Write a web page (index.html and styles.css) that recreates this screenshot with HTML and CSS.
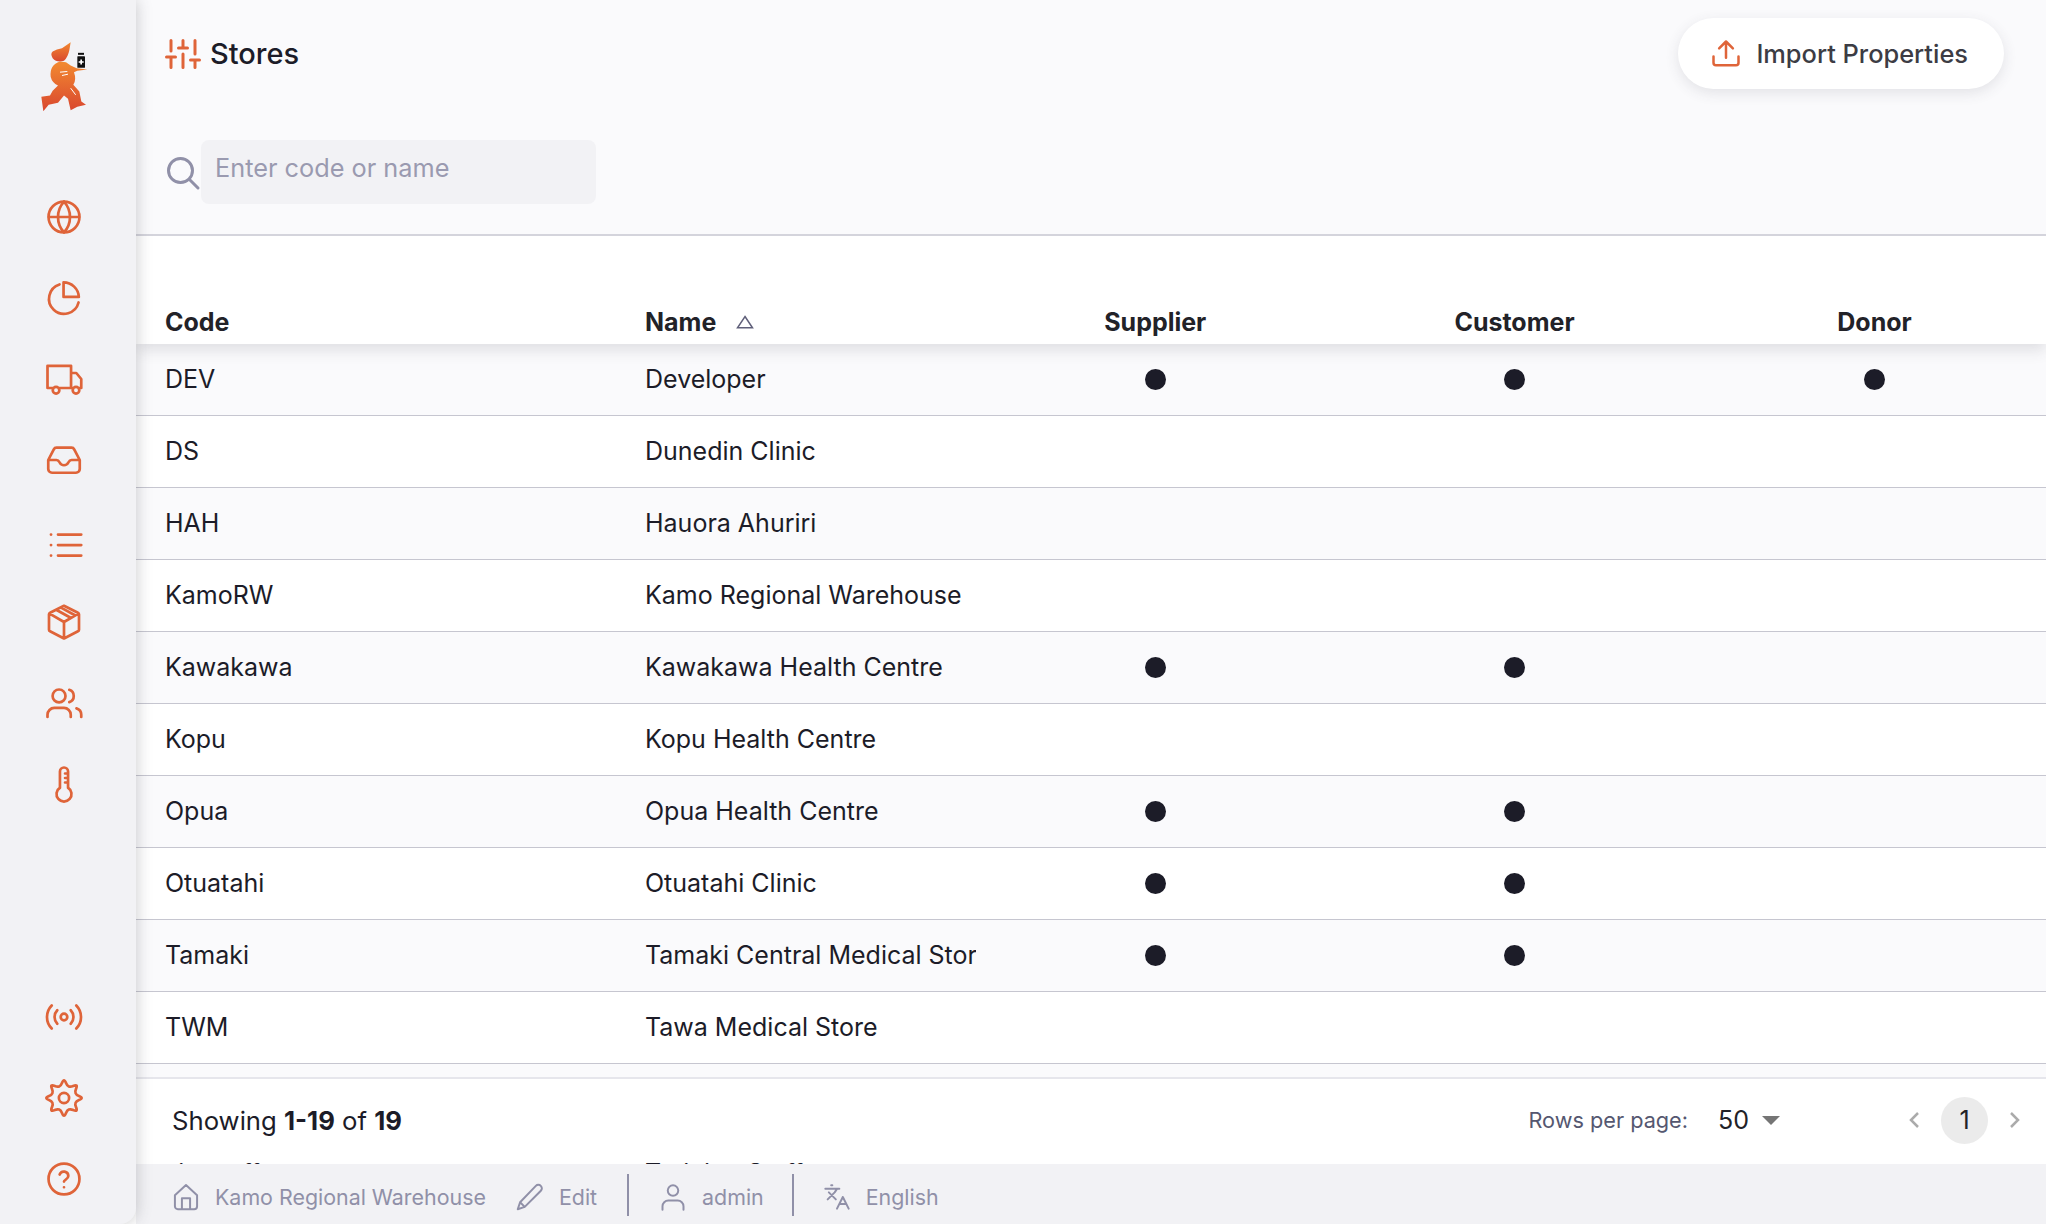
FILE: index.html
```html
<!DOCTYPE html>
<html lang="en">
<head>
<meta charset="utf-8">
<title>Stores</title>
<link rel="stylesheet" href="styles.css">
</head>
<body>
<div class="app">
  <aside class="sidebar">
    <div class="logo">
      <svg viewBox="55 35 150 215" width="50" height="72">
        <defs>
          <linearGradient id="lg" x1="0" y1="0" x2="0" y2="1">
            <stop offset="0" stop-color="#f28a30"/>
            <stop offset="1" stop-color="#d9472f"/>
          </linearGradient>
        </defs>
        <path fill="url(#lg)" d="M150 38 L146 62 Q142 82 130 94 Q108 100 96 86 Q88 72 96 66 Q108 58 124 56 Z"/>
        <path fill="url(#lg)" d="M118 96 Q86 106 90 142 Q94 160 112 168 L96 184 L88 198 L62 202 L68 245 L84 226 L112 220 L130 198 L142 208 L150 242 L170 232 L196 226 L182 216 L176 186 L158 166 Q168 150 160 128 L170 124 L200 120 L168 116 L150 108 L136 98 Z"/>
        <path fill="none" stroke="#fff" stroke-width="3" d="M118 128 L140 126 M124 138 L142 134 M150 176 L165 196"/>
        <rect x="172" y="70" width="18" height="6" fill="#111"/>
        <rect x="170" y="80" width="23" height="35" rx="2" fill="#111"/>
        <path fill="#fff" d="M179 90h5v5h5v5h-5v5h-5v-5h-5v-5h5z"/>
      </svg>
    </div>
    <nav class="nav">
      <a class="nav-item"><svg class="ico" viewBox="0 0 24 24"><circle cx="12" cy="12" r="10.3"/><path d="M2 12h20M12 1.7a15.3 15.3 0 0 1 4 10.3 15.3 15.3 0 0 1-4 10.3A15.3 15.3 0 0 1 8 12a15.3 15.3 0 0 1 4-10.3z"/></svg></a>
      <a class="nav-item"><svg class="ico" viewBox="0 0 24 24"><path d="M9 3A10 10 0 1 0 21.7 15"/><path d="M11.7 1.6a10.2 10.2 0 0 1 10.2 9.7H11.7z"/></svg></a>
      <a class="nav-item"><svg class="ico" viewBox="0 0 24 24"><path d="M4.500 18H1V3.200h15.700V18H9M16.700 8h3.500l3.300 4v6h-1.200M16.700 18h1"/><circle cx="6.700" cy="19.500" r="2.200"/><circle cx="20" cy="19.500" r="2.200"/></svg></a>
      <a class="nav-item"><svg class="ico" viewBox="0 0 24 24"><path d="M7 3.800h10a2 2 0 0 1 1.800 1.100L22.500 12v6a2.500 2.500 0 0 1-2.500 2.500H4A2.500 2.500 0 0 1 1.500 18v-6L5.200 4.900A2 2 0 0 1 7 3.800zM1.700 12H7c1 0 1.500.5 2 1.500s1.500 2 3 2 2.500-1 3-2 1-1.500 2-1.500h5.300"/></svg></a>
      <a class="nav-item"><svg class="ico" viewBox="0 0 24 24"><path d="M8 7.700h15.500M8 14.700h15.500M8 21.700h15.500M3.300 7.700h.1M3.300 14.700h.1M3.300 21.700h.1"/></svg></a>
      <a class="nav-item"><svg class="ico" viewBox="0 0 24 24"><path d="M12 1.200l9.300 4.600a1.200 1.200 0 0 1 .7 1.100v10.200a1.200 1.200 0 0 1-.7 1.100L12 23 2.700 18.200a1.200 1.200 0 0 1-.7-1.100V6.900a1.200 1.200 0 0 1 .7-1.100zM2.400 6.400L12 12l9.600-5.600M12 12v11M6.800 3.800l9.900 5.500M10 2.400l9.300 5.100"/></svg></a>
      <a class="nav-item"><svg class="ico" viewBox="0 0 24 24"><circle cx="8.700" cy="7.300" r="4.300"/><path d="M1 21.300v-1.500a4.500 4.500 0 0 1 4.500-4.500h6.500a4.500 4.500 0 0 1 4.500 4.500v1.500M15.500 3.200a4.300 4.300 0 0 1 0 8.200M20.300 15.600a4.500 4.500 0 0 1 3.200 4.300v1.400"/></svg></a>
      <a class="nav-item"><svg class="ico" viewBox="0 0 24 24"><path d="M9.300 14.500V3.700a2.700 2.700 0 0 1 5.400 0v10.800a5 5 0 1 1-5.400 0zM12.700 5h2M12.700 8h2M12.700 11h2"/></svg></a>
    </nav>
    <nav class="nav nav-bottom">
      <a class="nav-item"><svg class="ico" viewBox="0 0 24 24"><circle cx="12" cy="12" r="2.200"/><path d="M7.500 7.500a6.500 6.500 0 0 0 0 9M16.500 7.500a6.500 6.500 0 0 1 0 9M3.800 4.300a11 11 0 0 0 0 15.400M20.200 4.300a11 11 0 0 1 0 15.400"/></svg></a>
      <a class="nav-item"><svg class="ico" viewBox="-12 -12 24 24"><path d="M9.985 -1.340Q13.500 0 9.985 1.340Q6.470 2.680 8.010 6.115Q9.550 9.550 6.115 8.010Q2.680 6.470 1.340 9.985Q0 13.500 -1.340 9.985Q-2.680 6.470 -6.115 8.010Q-9.550 9.550 -8.010 6.115Q-6.470 2.680 -9.985 1.340Q-13.500 0 -9.985 -1.340Q-6.470 -2.680 -8.010 -6.115Q-9.550 -9.550 -6.115 -8.010Q-2.680 -6.470 -1.340 -9.985Q0 -13.500 1.340 -9.985Q2.680 -6.470 6.115 -8.010Q9.550 -9.550 8.010 -6.115Q6.470 -2.680 9.985 -1.340Z"/><circle r="3.400"/></svg></a>
      <a class="nav-item"><svg class="ico" viewBox="0 0 24 24"><circle cx="12" cy="12" r="10.300"/><path d="M9.100 9a3 3 0 0 1 5.800 1c0 2-2.900 2.700-2.900 3.700M12 17.500h.01"/></svg></a>
    </nav>
  </aside>
  <main class="main">
    <header class="topbar">
      <div class="title-row">
        <div class="title">
          <svg class="ico title-ico" viewBox="0 0 24 24"><path d="M4 21v-7M4 10V3M12 21v-9M12 8V3M20 21v-5M20 12V3M1 14h6M9 8h6M17 16h6"/></svg>
          <h1>Stores</h1>
        </div>
        <button class="import-btn">
          <svg class="ico import-ico" viewBox="0 0 24 24"><path d="M2 14v5a2 2 0 0 0 2 2h16a2 2 0 0 0 2-2v-5M12 15V2M6.500 7.500L12 2l5.500 5.500"/></svg>
          <span>Import Properties</span>
        </button>
      </div>
      <div class="search-row">
        <svg class="search-ico" viewBox="0 0 36 36"><circle cx="15.500" cy="15.500" r="12"/><path d="M24.500 24.500l8.500 8.500"/></svg>
        <input class="search" placeholder="Enter code or name">
      </div>
    </header>
    <section class="table-wrap">
      <div class="thead row">
        <div class="cell left">Code</div>
        <div class="cell left sorted">Name
          <svg class="sort" viewBox="0 0 18 14"><path d="M9 1.500L16.500 12.800H1.500z"/></svg>
        </div>
        <div class="cell center">Supplier</div>
        <div class="cell center">Customer</div>
        <div class="cell center">Donor</div>
      </div>
      <div class="row tint"><div class="cell left">DEV</div><div class="cell left">Developer</div><div class="cell center"><i class="dot"></i></div><div class="cell center"><i class="dot"></i></div><div class="cell center"><i class="dot"></i></div></div>
      <div class="row"><div class="cell left">DS</div><div class="cell left">Dunedin Clinic</div></div>
      <div class="row tint"><div class="cell left">HAH</div><div class="cell left">Hauora Ahuriri</div></div>
      <div class="row"><div class="cell left">KamoRW</div><div class="cell left">Kamo Regional Warehouse</div></div>
      <div class="row tint"><div class="cell left">Kawakawa</div><div class="cell left">Kawakawa Health Centre</div><div class="cell center"><i class="dot"></i></div><div class="cell center"><i class="dot"></i></div></div>
      <div class="row"><div class="cell left">Kopu</div><div class="cell left">Kopu Health Centre</div></div>
      <div class="row tint"><div class="cell left">Opua</div><div class="cell left">Opua Health Centre</div><div class="cell center"><i class="dot"></i></div><div class="cell center"><i class="dot"></i></div></div>
      <div class="row"><div class="cell left">Otuatahi</div><div class="cell left">Otuatahi Clinic</div><div class="cell center"><i class="dot"></i></div><div class="cell center"><i class="dot"></i></div></div>
      <div class="row tint"><div class="cell left">Tamaki</div><div class="cell left">Tamaki Central Medical Store</div><div class="cell center"><i class="dot"></i></div><div class="cell center"><i class="dot"></i></div></div>
      <div class="row"><div class="cell left">TWM</div><div class="cell left">Tawa Medical Store</div></div>
      <div class="row tint"></div>
      <div class="row peek"><div class="cell left">sitestaff</div><div class="cell left">Training Staff</div></div>
      <div class="pagination">
        <div class="showing">Showing <b>1-19</b> of <b>19</b></div>
        <div class="pager">
          <span class="rpp-label">Rows per page:</span>
          <span class="rpp-value">50</span>
          <i class="caret"></i>
          <svg class="chev prev" viewBox="0 0 12 18"><path d="M10 2L3 9l7 7"/></svg>
          <span class="page">1</span>
          <svg class="chev next" viewBox="0 0 12 18"><path d="M2 2l7 7-7 7"/></svg>
        </div>
      </div>
    </section>
    <footer class="footer">
      <svg class="fico" viewBox="0 0 24 24"><path d="M2.500 10.500L12 1.800l9.500 8.700V20a2.500 2.500 0 0 1-2.500 2.500H5A2.500 2.500 0 0 1 2.500 20zM8.500 22.500V13h7v9.500"/></svg>
      <span class="ftxt store">Kamo Regional Warehouse</span>
      <svg class="fico pencil" viewBox="0 0 24 24"><path d="M17 2.500a3 3 0 0 1 4.300 4.200L7.500 20.500 1.500 22.500l2-6zM3.500 16.500l4 4"/></svg>
      <span class="ftxt edit">Edit</span>
      <i class="sep"></i>
      <svg class="fico user" viewBox="0 0 24 24"><circle cx="12" cy="6.500" r="4.500"/><path d="M3 23v-3a5 5 0 0 1 5-5h8a5 5 0 0 1 5 5v3"/></svg>
      <span class="ftxt admin">admin</span>
      <i class="sep"></i>
      <svg class="fico lang" viewBox="0 0 24 24"><path d="M5 8l6 6M4 14l6-6 2-3M2 5h12M7 2h1M22 22l-5-10-5 10M14 18h6"/></svg>
      <span class="ftxt">English</span>
    </footer>
  </main>
</div>
</body>
</html>
```

FILE: styles.css
```css
* { box-sizing: border-box; }
html, body { margin: 0; height: 100%; }
body { font-family: Inter, "Liberation Sans", sans-serif; color: #1c1c28; background: #fff; }
.app { display: flex; height: 1224px; width: 2046px; overflow: hidden; }

.sidebar {
  width: 136px; flex: none; background: #f2f2f5; display: flex; flex-direction: column;
  box-shadow: 0 0 16px rgba(60, 60, 70, .28); border-bottom-right-radius: 16px; position: relative; z-index: 3;
  padding: 0 8px 5px 0;
}
.logo { height: 176.5px; padding: 41px 0 0 39px; }
.logo svg { display: block; }
.nav { display: flex; flex-direction: column; }
.nav-bottom { margin-top: auto; }
.nav-item { height: 81px; display: flex; align-items: center; justify-content: center; }
.ico { width: 36px; height: 36px; fill: none; stroke: #df6439; stroke-width: 1.8; stroke-linecap: round; stroke-linejoin: round; overflow: visible; }

.main { flex: 1; min-width: 0; display: flex; flex-direction: column; }
.topbar { height: 236px; flex: none; background: #fafafc; border-bottom: 2px solid #d4d4dc; padding: 18px 42px 0 29px; }
.title-row { display: flex; justify-content: space-between; align-items: center; height: 71px; }
.title { display: flex; align-items: center; gap: 9px; }
.title h1 { margin: 0; font-size: 29px; font-weight: 500; line-height: 36px; color: #1c1c28; }
.title-ico { stroke-width: 2; }
.import-btn {
  height: 71px; border: 0; border-radius: 36px; background: #fff; display: flex; align-items: center; gap: 15px;
  padding: 0 36px 0 33px; font: 500 25.4px Inter, sans-serif; color: #3c3c44;
  box-shadow: 0 4px 14px rgba(60, 60, 70, .12);
}
.import-ico { width: 30px; height: 30px; stroke-width: 2; }
.search-row { display: flex; align-items: flex-start; margin-top: 51px; }
.search-ico { width: 36px; height: 36px; margin-top: 15px; fill: none; stroke: #9090a8; stroke-width: 3; stroke-linecap: round; flex: none; }
.search {
  width: 395px; height: 64px; border: 0; border-radius: 8px; background: #f2f2f5; padding: 0 14px 10px;
  font: 400 25.3px Inter, sans-serif; color: #1c1c28; outline: 0;
}
.search::placeholder { color: #9a9ab0; opacity: 1; }

.table-wrap { flex: 1; min-height: 0; position: relative; overflow: hidden; background: #fff; }
.row { display: grid; grid-template-columns: 480px 360px 358.5px 360px 360px; height: 72px; padding-bottom: 1px; align-items: center; border-bottom: 1px solid #c6c6d0; font-size: 25px; color: #1c1c28; }
.tint { background: #fafafc; }
.thead { height: 108px; padding: 63px 0 0; border-bottom: 0; background: #fff; font-size: 25px; font-weight: 700; color: #222228; box-shadow: 0 6px 14px rgba(60, 60, 70, .14); position: relative; z-index: 1; }
.peek { padding-top: 3px; }
.cell { min-width: 0; overflow: hidden; white-space: nowrap; }
.left { padding-left: 29px; }
.center { display: flex; justify-content: center; }
.sorted { display: flex; align-items: center; }
.sort { width: 18px; height: 14px; margin-left: 20px; fill: none; stroke: #60607a; stroke-width: 1.5; }
.dot { width: 21px; height: 21px; border-radius: 50%; background: #1c1c28; display: block; }

.pagination {
  position: absolute; left: 0; right: 0; bottom: 4px; height: 83px; background: #fff; border-top: 2px solid #e6e6ec;
  display: flex; align-items: center; justify-content: space-between; z-index: 2; padding: 1px 25px 0 36px; font-size: 25.7px;
}
.showing b { font-weight: 700; }
.pager { display: flex; align-items: center; }
.rpp-label { font-size: 21.7px; color: #555770; }
.rpp-value { margin-left: 30px; font-size: 25px; color: #222228; }
.caret { margin-left: 13px; border-left: 9.5px solid transparent; border-right: 9.5px solid transparent; border-top: 9px solid #757575; }
.chev { width: 12px; height: 18px; fill: none; stroke: #ababab; stroke-width: 2.5; }
.prev { margin-left: 128px; }
.page { width: 47px; height: 47px; margin: 0 21px; border-radius: 50%; background: #ebebeb; display: flex; align-items: center; justify-content: center; font-size: 25px; color: #222228; }
.next { margin-left: 0; }

.footer { height: 60px; flex: none; background: #f2f2f5; display: flex; align-items: center; padding: 5px 0 0 36px; color: #9090a8; position: relative; z-index: 2; }
.fico { width: 28px; height: 28px; fill: none; stroke: #9090a8; stroke-width: 1.7; stroke-linecap: round; stroke-linejoin: round; flex: none; }
.ftxt { font-size: 21.4px; margin-left: 15px; }
.store { margin-right: 30px; }
.edit { margin-right: 30px; }
.sep { width: 2px; height: 42px; background: #9090a8; flex: none; margin-top: -3px; }
.user { margin-left: 30px; }
.admin { margin-right: 28px; }
.lang { margin-left: 29px; }
```
